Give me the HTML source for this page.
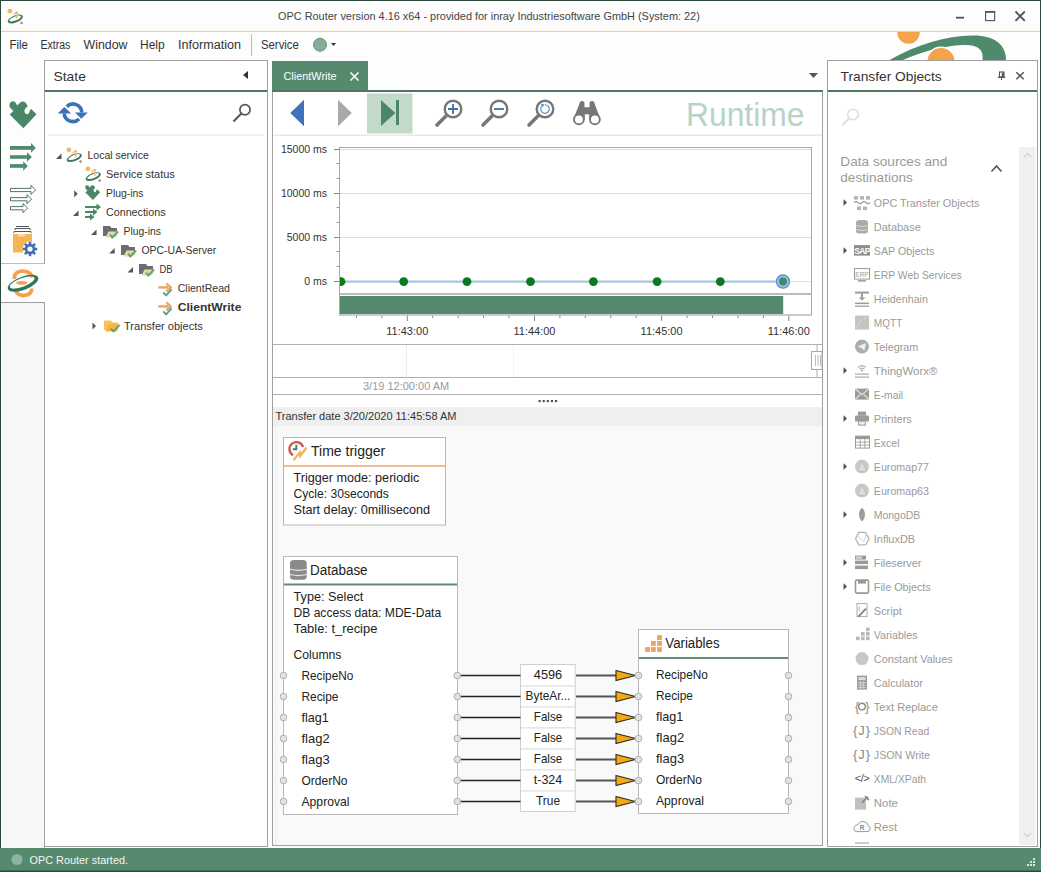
<!DOCTYPE html>
<html><head><meta charset="utf-8">
<style>
*{margin:0;padding:0}
html,body{width:1041px;height:872px;overflow:hidden;background:#fff}
svg{display:block;font-family:"Liberation Sans",sans-serif}
</style></head><body>
<svg width="1041" height="872" viewBox="0 0 1041 872">
<!-- base -->
<rect x="0" y="0" width="1041" height="872" fill="#fdfdfd"/>
<!-- title bar -->
<rect x="0" y="0" width="1041" height="31" fill="#fdfdfd"/><rect x="0" y="27" width="1041" height="4" fill="#fffaf3"/>
<rect x="0" y="31" width="1041" height="1" fill="#f3c9a5"/>
<text x="278" y="20" font-size="11" fill="#444" textLength="421.8" lengthAdjust="spacingAndGlyphs">OPC Router version 4.16 x64 - provided for inray Industriesoftware GmbH (System: 22)</text>
<!-- window buttons -->
<rect x="956" y="16.8" width="8" height="1.8" fill="#555"/>
<rect x="985.6" y="11.6" width="9" height="9" fill="none" stroke="#555" stroke-width="1.1"/>
<rect x="985" y="11" width="10.2" height="1.8" fill="#555"/>
<path d="M1015.5 11.5 L1024.8 20.8 M1024.8 11.5 L1015.5 20.8" stroke="#555" stroke-width="1.9"/>
<!-- big logo behind -->
<g id="biglogo">
 <clipPath id="clipLogo"><rect x="860" y="32" width="181" height="28"/></clipPath>
 <g clip-path="url(#clipLogo)">
  <circle cx="908.5" cy="32.5" r="11.2" fill="#f4a34b"/>
  <path d="M886 62 C915 45 945 36 972 35.5 C995 35 1007 45 1006 62 L982 62 C985 50 978 44 963 45 C940 46 915 54 899 62 Z" fill="#4f8a6c"/>
  <circle cx="941" cy="61.5" r="14.3" fill="#f4a34b" stroke="#fff" stroke-width="1.4"/>
 </g>
</g>
<!-- menu -->
<g font-size="12" fill="#333">
 <text x="9.5" y="49" textLength="18.5" lengthAdjust="spacingAndGlyphs">File</text>
 <text x="40.5" y="49" textLength="29.8" lengthAdjust="spacingAndGlyphs">Extras</text>
 <text x="83.5" y="49" textLength="44.0" lengthAdjust="spacingAndGlyphs">Window</text>
 <text x="140" y="49" textLength="24.7" lengthAdjust="spacingAndGlyphs">Help</text>
 <text x="178" y="49" textLength="63.1" lengthAdjust="spacingAndGlyphs">Information</text>
 <text x="261" y="49" textLength="37.8" lengthAdjust="spacingAndGlyphs">Service</text>
</g>
<rect x="251" y="34" width="1" height="22" fill="#bbb"/>
<circle cx="320" cy="44.7" r="6.5" fill="#86ad96" stroke="#6f8f7c" stroke-width="1"/>
<path d="M331 43 L336 43 L333.5 46 Z" fill="#333"/>
<!-- window border -->
<rect x="0" y="0" width="1" height="872" fill="#2b4a3b"/>
<rect x="1040" y="0" width="1" height="872" fill="#2b4a3b"/>
<rect x="0" y="0" width="1041" height="1" fill="#2b4a3b"/>

<!-- left sidebar -->
<rect x="1" y="302" width="43" height="546" fill="#f7f7f7"/>
<path d="M1 263.5 H44.5 V60" stroke="#bdbdbd" fill="none"/>
<path d="M1 302.5 H44.5 V848" stroke="#9e9e9e" fill="none"/>


<!-- sidebar icons -->
<g id="sideicons">
 <path d="M9.7 114.6 L13.4 111 L10.2 107.8 C9 106.4 9.2 103.2 10.8 102 C12.4 100.8 14.4 101.2 15.4 102.4 L17.2 105.6 L20.3 102.5 C21.6 101.3 24.2 101.3 25.6 102.7 L27.8 105.9 L25.4 108.4 C23.9 110.2 24.4 113.2 26.4 114 C28 114.6 29.2 113.6 29.9 110.3 L31.2 108.9 L36.5 114.2 L23.4 128.3 Z" fill="#4a8767"/>
 <g fill="#4f8a6c">
  <rect x="10" y="146" width="21.5" height="3.8"/><path d="M31 143 L35.8 147.9 L31 152.7Z"/>
  <rect x="10" y="155.2" width="17.5" height="3.6"/><path d="M27 152.3 L31.9 157 L27 161.8Z"/>
  <rect x="10" y="164.1" width="13.5" height="3.7"/><path d="M23.2 161.2 L27.8 166 L23.2 170.8Z"/>
 </g>
 <g fill="#fff" stroke="#3f6253" stroke-width="0.9">
  <path d="M10.5 188.4 H31 V185.4 L35.6 189.9 L31 194.5 V191.6 H10.5Z"/>
  <path d="M10.5 197.6 H27 V194.6 L31.6 199.1 L27 203.7 V200.8 H10.5Z"/>
  <path d="M10.5 206.6 H23 V203.6 L27.6 208.1 L23 212.7 V209.8 H10.5Z"/>
 </g>
 <g>
  <path d="M16 226.5 H29" stroke="#555" stroke-width="1"/>
  <path d="M15 230 V228.5 H30 V230" stroke="#555" stroke-width="1" fill="none"/>
  <path d="M14 233 V231.5 H31 V233" stroke="#555" stroke-width="1" fill="none"/>
  <rect x="13" y="234" width="19" height="18.5" fill="#f6b554"/>
  <rect x="18" y="234" width="7" height="2.5" fill="#fbd9a0"/>
  <g transform="translate(30,249)">
   <circle r="7.5" fill="#fff"/>
   <g fill="#3e6eb0">
    <circle r="5.2"/>
    <rect x="-1.3" y="-7.2" width="2.6" height="14.4"/>
    <rect x="-7.2" y="-1.3" width="14.4" height="2.6"/>
    <rect x="-1.3" y="-7.2" width="2.6" height="14.4" transform="rotate(45)"/>
    <rect x="-7.2" y="-1.3" width="14.4" height="2.6" transform="rotate(45)"/>
   </g>
   <circle r="2.6" fill="#fff"/>
  </g>
 </g>
 <g>
  <path d="M14.5 279 C13.5 273 19 271 23 271.2 C28 271.4 31.5 273.5 31.8 277.5" stroke="#f1a24f" stroke-width="3.8" fill="none"/>
  <path d="M15.5 288.5 C16 294 20 295.5 23 295.5 C29 295.5 31.8 292.5 31.8 288.5" stroke="#f1a24f" stroke-width="3.8" fill="none"/>
  <ellipse cx="21.8" cy="282.8" rx="5.6" ry="1.9" fill="#f1a24f"/>
  <g transform="rotate(-21 23 283.3)"><path fill-rule="evenodd" fill="#2b7658" d="M6.8 283.3 A16.2 6.6 0 1 0 39.2 283.3 A16.2 6.6 0 1 0 6.8 283.3 Z M9.3 282.3 A13.2 4.3 0 1 0 35.7 282.3 A13.2 4.3 0 1 0 9.3 282.3 Z"/></g>
 </g>
</g>

<!-- State panel -->
<rect x="44.5" y="60.5" width="223" height="786" fill="#fff" stroke="#a0a0a0"/>
<rect x="43.5" y="264" width="2" height="38" fill="#fff"/>
<rect x="45" y="90" width="222" height="2" fill="#527565"/>
<text x="53.5" y="81" font-size="13.5" fill="#333" textLength="32.4" lengthAdjust="spacingAndGlyphs">State</text>
<path d="M243 75 L248 71 L248 79 Z" fill="#333"/>
<rect x="48" y="134.5" width="216" height="1" fill="#e3e3e3"/>


<defs>
 <g id="fold">
  <path d="M0 0 H7 L8.5 2 H14 V10 H0 Z" fill="#6f6b73"/>
  <path d="M2.5 11.5 L5.5 5.5 H16 L12.5 11.5 Z" fill="#e3dca0"/>
  <path d="M7 8.5 L9.2 11.5 L15 5.5" stroke="#5f9f7c" stroke-width="1.8" fill="none"/>
 </g>
 <g id="foldy">
  <path d="M0 0.5 H7 L8.5 2.5 H14 V10 H0 Z" fill="#f5c25c"/>
  <path d="M1.5 11.5 L4.5 4.5 H16 L13 11.5 Z" fill="#f2b444"/>
  <path d="M7 8.5 L9.5 11.5 L15.5 5" stroke="#5f9f7c" stroke-width="1.8" fill="none"/>
 </g>
 <g id="carrow">
  <path d="M0 0 H10" stroke="#e9a562" stroke-width="2.4"/>
  <path d="M8 -4 L12.5 0 L8 4" stroke="#e9a562" stroke-width="2.2" fill="none"/>
  <path d="M5 5 L7.8 8 L13.3 2" stroke="#5a9c8a" stroke-width="1.8" fill="none"/>
 </g>
 <g id="orb">
  <circle cx="2.9" cy="2.8" r="2.4" fill="#e7bd5e"/>
  <circle cx="9.6" cy="4.3" r="1.5" fill="#e9b49c"/>
  <circle cx="7.3" cy="5.6" r="1" fill="#e9b49c"/>
  <g transform="rotate(-22 8.3 10.6)"><path fill-rule="evenodd" fill="#3e7862" d="M0.2 10.6 A8.1 3.5 0 1 0 16.4 10.6 A8.1 3.5 0 1 0 0.2 10.6Z M2.2 10.1 A6.2 2 0 1 0 14.6 10.1 A6.2 2 0 1 0 2.2 10.1Z"/></g>
  <rect x="8.8" y="6" width="1.6" height="4" fill="#e9c46a"/>
  <circle cx="14.6" cy="14.6" r="1.3" fill="#a58f80"/>
 </g>
 <path id="exp" d="M0 0 L5.5 -5.5 L5.5 0 Z" fill="#555"/>
 <path id="col" d="M0 -3.5 L3.5 0 L0 3.5 Z" fill="#555"/>
</defs>
<use href="#orb" x="7" y="8.4"/>
<g id="stateToolbar">
 <g fill="none" stroke="#3b73b9" stroke-width="3.6">
  <path d="M66.8 106.6 A8.8 8.8 0 0 1 81.8 112.5"/>
  <path d="M64.2 113.3 A8.8 8.8 0 0 0 79.2 119"/>
 </g>
 <path d="M57.7 113.6 L64.3 106.9 L71.2 113.6Z" fill="#3b73b9"/>
 <path d="M75 112.4 L87.9 112.4 L81.3 118.8Z" fill="#3b73b9"/>
 <circle cx="245" cy="109.8" r="5.1" fill="none" stroke="#555" stroke-width="1.7"/>
 <path d="M241.3 113.5 L233.5 121.5" stroke="#555" stroke-width="2"/>
</g>
<g id="tree" font-size="11" fill="#333">
 <use href="#exp" x="56" y="159"/>
 <use href="#orb" x="66" y="147"/>
 <text x="87.5" y="158.7" textLength="61.3" lengthAdjust="spacingAndGlyphs">Local service</text>
 <use href="#orb" x="85" y="166"/>
 <text x="106" y="177.7" textLength="68.8" lengthAdjust="spacingAndGlyphs">Service status</text>
 <use href="#col" x="74.2" y="193.7"/>
 <g transform="translate(85,185) scale(0.55)"><path d="M9.7 114.6 L13.4 111 L10.2 107.8 C9 106.4 9.2 103.2 10.8 102 C12.4 100.8 14.4 101.2 15.4 102.4 L17.2 105.6 L20.3 102.5 C21.6 101.3 24.2 101.3 25.6 102.7 L27.8 105.9 L25.4 108.4 C23.9 110.2 24.4 113.2 26.4 114 C28 114.6 29.2 113.6 29.9 110.3 L31.2 108.9 L36.5 114.2 L23.4 128.3 Z" transform="translate(-9,-101)" fill="#4a8767"/></g>
 <text x="106" y="196.7" textLength="37.5" lengthAdjust="spacingAndGlyphs">Plug-ins</text>
 <use href="#exp" x="73" y="215.9"/>
 <g fill="#4a8767">
  <rect x="85" y="206" width="12" height="2"/><path d="M96.5 203.5 L101 207 L96.5 210.5Z"/>
  <rect x="85" y="211" width="8.5" height="2"/><path d="M93 208.5 L97.5 212 L93 215.5Z"/>
  <rect x="85" y="216" width="5.5" height="2"/><path d="M90 213.5 L94.5 217 L90 220.5Z"/>
 </g>
 <text x="106" y="215.7" textLength="59.5" lengthAdjust="spacingAndGlyphs">Connections</text>
 <use href="#exp" x="91" y="234.9"/>
 <use href="#fold" x="103" y="226"/>
 <text x="123.5" y="234.7" textLength="37.5" lengthAdjust="spacingAndGlyphs">Plug-ins</text>
 <use href="#exp" x="109.2" y="253.6"/>
 <use href="#fold" x="121" y="245"/>
 <text x="141.5" y="253.7" textLength="74.8" lengthAdjust="spacingAndGlyphs">OPC-UA-Server</text>
 <use href="#exp" x="127.5" y="272.6"/>
 <use href="#fold" x="139" y="264"/>
 <text x="159.5" y="272.7" textLength="13.1" lengthAdjust="spacingAndGlyphs">DB</text>
 <use href="#carrow" x="158.3" y="287.4"/>
 <text x="177.7" y="291.7" textLength="52.2" lengthAdjust="spacingAndGlyphs">ClientRead</text>
 <use href="#carrow" x="158.3" y="306.4"/>
 <text x="177.7" y="310.7" font-weight="bold" textLength="63.7" lengthAdjust="spacingAndGlyphs">ClientWrite</text>
 <use href="#col" x="92.5" y="326"/>
 <use href="#foldy" x="104" y="320"/>
 <text x="124" y="329.7" textLength="78.8" lengthAdjust="spacingAndGlyphs">Transfer objects</text>
</g>

<!-- Document panel -->
<rect x="272.5" y="91.5" width="550" height="754" fill="#fff" stroke="#a0a0a0"/>
<rect x="272" y="61" width="96" height="31" fill="#558a6e"/>
<rect x="272" y="90" width="551" height="2" fill="#527565"/>
<text x="283.5" y="80" font-size="11.5" fill="#fff" textLength="53.0" lengthAdjust="spacingAndGlyphs">ClientWrite</text>
<path d="M350.5 72.5 L358.5 80.5 M358.5 72.5 L350.5 80.5" stroke="#fff" stroke-width="1.6"/>
<path d="M809 73 L818 73 L813.5 78 Z" fill="#555"/>
<rect x="273" y="134.5" width="549" height="1.5" fill="#e8e8e8"/>


<g id="docToolbar">
 <path d="M290.3 113 L304 99.8 L304 126.2 Z" fill="#3d73b8"/>
 <path d="M338 99.8 L351.8 113 L338 126.2 Z" fill="#a9a9a9"/>
 <rect x="367" y="93.5" width="45.5" height="40" fill="#c3dacb"/>
 <path d="M381 100 L395.3 113 L381 126 Z" fill="#4a8767"/>
 <rect x="396" y="100" width="3" height="25" fill="#4a8767"/>
 <g stroke="#777" fill="none">
  <circle cx="453" cy="109" r="8.3" stroke-width="2.4" fill="#fff"/>
  <path d="M446.5 115.5 L437 125" stroke-width="3.6" stroke-linecap="round"/>
  <circle cx="499" cy="109" r="8.3" stroke-width="2.4" fill="#fff"/>
  <path d="M492.5 115.5 L483 125" stroke-width="3.6" stroke-linecap="round"/>
  <circle cx="545" cy="109" r="8.3" stroke-width="2.4" fill="#fff"/>
  <path d="M538.5 115.5 L529 125" stroke-width="3.6" stroke-linecap="round"/>
 </g>
 <path d="M453 104 V114 M448 109 H458" stroke="#3d6fae" stroke-width="1.8"/>
 <path d="M494 109 H504" stroke="#3d6fae" stroke-width="1.8"/>
 <path d="M541.5 106.5 A4.3 4.3 0 1 0 545 104.7" stroke="#4d8ac9" stroke-width="1.1" fill="none"/>
 <path d="M541 103.5 L544.8 104.7 L541.8 107.3Z" fill="#4d8ac9"/>
 <path d="M573.2 119.4 L579.5 103.6 A2.5 2.5 0 0 1 584.5 103.6 V107.3 H589.5 V103.6 A2.5 2.5 0 0 1 594.5 103.6 L600.6 119.4 Z" fill="#777"/>
 <rect x="584.8" y="114.3" width="4.3" height="8" fill="#fff"/>
 <circle cx="578.9" cy="119.4" r="4.9" fill="#fff" stroke="#777" stroke-width="1.9"/>
 <circle cx="594.9" cy="119.4" r="4.9" fill="#fff" stroke="#777" stroke-width="1.9"/>
 <text x="686" y="125.7" font-size="32.8" fill="#b6d3ca" textLength="118.4" lengthAdjust="spacingAndGlyphs">Runtime</text>
</g>

<g id="chart">
<rect x="339.5" y="147.5" width="472" height="167.5" fill="#fff" stroke="#a8a8a8"/>
<path d="M340 149.5 H811" stroke="#dcdcdc" stroke-width="1"/>
<path d="M340 193.5 H811" stroke="#dcdcdc" stroke-width="1"/>
<path d="M340 237.5 H811" stroke="#dcdcdc" stroke-width="1"/>
<path d="M340 281.6 H811" stroke="#e0e0e0" stroke-width="1"/>
<path d="M334 149.5 H339.5" stroke="#888" stroke-width="1"/>
<text x="327" y="152.8" font-size="10.5" fill="#333" text-anchor="end">15000 ms</text>
<path d="M334 193.5 H339.5" stroke="#888" stroke-width="1"/>
<text x="327" y="197.0" font-size="10.5" fill="#333" text-anchor="end">10000 ms</text>
<path d="M334 237.5 H339.5" stroke="#888" stroke-width="1"/>
<text x="327" y="241.20000000000002" font-size="10.5" fill="#333" text-anchor="end">5000 ms</text>
<path d="M334 281.5 H339.5" stroke="#888" stroke-width="1"/>
<text x="327" y="285.40000000000003" font-size="10.5" fill="#333" text-anchor="end">0 ms</text>
<path d="M336.5 163.5 H339.5" stroke="#999" stroke-width="1"/>
<path d="M336.5 178.5 H339.5" stroke="#999" stroke-width="1"/>
<path d="M336.5 207.5 H339.5" stroke="#999" stroke-width="1"/>
<path d="M336.5 222.5 H339.5" stroke="#999" stroke-width="1"/>
<path d="M336.5 251.5 H339.5" stroke="#999" stroke-width="1"/>
<path d="M336.5 266.5 H339.5" stroke="#999" stroke-width="1"/>
<path d="M340 281.6 H783" stroke="#aac6de" stroke-width="2.3"/>
<clipPath id="plotclip"><rect x="340" y="147" width="472" height="168"/></clipPath><circle cx="341" cy="281.6" r="4.4" fill="#0b7a1f" clip-path="url(#plotclip)"/>
<circle cx="403.7" cy="281.6" r="4.4" fill="#0b7a1f"/>
<circle cx="467" cy="281.6" r="4.4" fill="#0b7a1f"/>
<circle cx="530.5" cy="281.6" r="4.4" fill="#0b7a1f"/>
<circle cx="593.4" cy="281.6" r="4.4" fill="#0b7a1f"/>
<circle cx="657.1" cy="281.6" r="4.4" fill="#0b7a1f"/>
<circle cx="720.3" cy="281.6" r="4.4" fill="#0b7a1f"/>
<circle cx="783" cy="281.6" r="6.6" fill="#9ec0e6" stroke="#5e8fcb" stroke-width="1.3"/>
<circle cx="783" cy="281.6" r="4" fill="#3f8a6c"/>
<rect x="339.5" y="293.2" width="472" height="1.6" fill="#adadad"/>
<rect x="340" y="296" width="443.2" height="18" fill="#558a6e"/>
<path d="M339.5 315 H811.6" stroke="#b5c6d3" stroke-width="1.2"/>
<path d="M356.4 315.5 V318" stroke="#888" stroke-width="1"/>
<path d="M381.9 315.5 V318" stroke="#888" stroke-width="1"/>
<path d="M407.3 315.5 V321" stroke="#888" stroke-width="1"/>
<path d="M432.7 315.5 V318" stroke="#888" stroke-width="1"/>
<path d="M458.2 315.5 V318" stroke="#888" stroke-width="1"/>
<path d="M483.6 315.5 V318" stroke="#888" stroke-width="1"/>
<path d="M509.0 315.5 V318" stroke="#888" stroke-width="1"/>
<path d="M534.5 315.5 V321" stroke="#888" stroke-width="1"/>
<path d="M559.9 315.5 V318" stroke="#888" stroke-width="1"/>
<path d="M585.3 315.5 V318" stroke="#888" stroke-width="1"/>
<path d="M610.8 315.5 V318" stroke="#888" stroke-width="1"/>
<path d="M636.2 315.5 V318" stroke="#888" stroke-width="1"/>
<path d="M661.6 315.5 V321" stroke="#888" stroke-width="1"/>
<path d="M687.1 315.5 V318" stroke="#888" stroke-width="1"/>
<path d="M712.5 315.5 V318" stroke="#888" stroke-width="1"/>
<path d="M737.9 315.5 V318" stroke="#888" stroke-width="1"/>
<path d="M763.4 315.5 V318" stroke="#888" stroke-width="1"/>
<path d="M788.8 315.5 V321" stroke="#888" stroke-width="1"/>
<text x="407.3" y="335" font-size="11" fill="#333" text-anchor="middle">11:43:00</text>
<text x="534.5" y="335" font-size="11" fill="#333" text-anchor="middle">11:44:00</text>
<text x="661.6" y="335" font-size="11" fill="#333" text-anchor="middle">11:45:00</text>
<text x="788.8" y="335" font-size="11" fill="#333" text-anchor="middle">11:46:00</text>
<rect x="273" y="344" width="549" height="1" fill="#b0b0b0"/>
<rect x="406" y="345" width="1" height="32" fill="#ececec"/>
<rect x="513" y="345" width="1" height="32" fill="#f2f2f2"/>
<rect x="273" y="377" width="549" height="1" fill="#b0b0b0"/>
<rect x="816.5" y="345" width="1" height="32" fill="#b0b0b0"/>
<rect x="811.5" y="351.5" width="10.5" height="18" fill="#fff" stroke="#a8a8a8"/>
<path d="M815.5 355 V366 M818 355 V366 M820.5 355 V366" stroke="#aaa" stroke-width="0.8"/>
<text x="363" y="390.3" font-size="11" fill="#999">3/19 12:00:00 AM</text>
<rect x="273" y="394" width="549" height="1" fill="#b0b0b0"/>
<rect x="538.5" y="400" width="2.2" height="2.2" fill="#555"/>
<rect x="542.6" y="400" width="2.2" height="2.2" fill="#555"/>
<rect x="546.7" y="400" width="2.2" height="2.2" fill="#555"/>
<rect x="550.8" y="400" width="2.2" height="2.2" fill="#555"/>
<rect x="554.9" y="400" width="2.2" height="2.2" fill="#555"/>
<rect x="273" y="407" width="549" height="19" fill="#efefef"/>
<text x="275.5" y="420" font-size="11" fill="#333">Transfer date 3/20/2020 11:45:58 AM</text>
<rect x="273" y="426" width="549" height="419" fill="#f9f9f9"/>
<rect x="275.5" y="426" width="1" height="419" fill="#ececec"/>
</g>

<g id="diagram">
<rect x="283.5" y="437.5" width="162" height="87.5" fill="#fff" stroke="#b8b8b8"/>
<rect x="284" y="465" width="161" height="2" fill="#f1bd8e"/>
<g>
 <path d="M303.1 447 A7 7 0 1 0 293 455.2" stroke="#c95a4c" stroke-width="2.3" fill="none"/>
 <path d="M296.3 444.8 V449.3 H292.8" stroke="#3f7a78" stroke-width="1.9" fill="none"/>
 <path d="M293.5 460 L300 452.5 L300.3 456 L306.5 447.5" stroke="#f0b45a" stroke-width="2.2" fill="none"/>
</g>
<text x="311" y="456" font-size="14" fill="#222" textLength="74.3" lengthAdjust="spacingAndGlyphs">Time trigger</text>
<text x="293.5" y="481.9" font-size="12.4" fill="#222" textLength="125.8" lengthAdjust="spacingAndGlyphs">Trigger mode: periodic</text>
<text x="293.5" y="497.9" font-size="12.4" fill="#222" textLength="95.4" lengthAdjust="spacingAndGlyphs">Cycle: 30seconds</text>
<text x="293.5" y="513.9" font-size="12.4" fill="#222" textLength="136.6" lengthAdjust="spacingAndGlyphs">Start delay: 0millisecond</text>
<rect x="283.5" y="556.5" width="174" height="258" fill="#fff" stroke="#b8b8b8"/>
<rect x="284" y="583.5" width="173" height="2" fill="#5f8f78"/>
<g>
 <rect x="290" y="560" width="16.7" height="19.8" rx="4" ry="3" fill="#8a8a8a"/>
 <path d="M290 569.3 Q298.3 571.5 306.7 569.3 M290 574.5 Q298.3 576.7 306.7 574.5" stroke="#e6e6e6" stroke-width="1.1" fill="none"/>
</g>
<text x="310" y="574.6" font-size="14" fill="#222" textLength="57.6" lengthAdjust="spacingAndGlyphs">Database</text>
<text x="293.5" y="601.0" font-size="12.4" fill="#222" textLength="69.8" lengthAdjust="spacingAndGlyphs">Type: Select</text>
<text x="293.5" y="616.8" font-size="12.4" fill="#222" textLength="147.7" lengthAdjust="spacingAndGlyphs">DB access data: MDE-Data</text>
<text x="293.5" y="632.6" font-size="12.4" fill="#222" textLength="83.8" lengthAdjust="spacingAndGlyphs">Table: t_recipe</text>
<text x="293.5" y="658.6" font-size="12.4" fill="#222" textLength="47.9" lengthAdjust="spacingAndGlyphs">Columns</text>
<rect x="638.5" y="629.5" width="150" height="184" fill="#fff" stroke="#b8b8b8"/>
<rect x="639" y="657" width="149" height="2" fill="#5f8f78"/>
<rect x="657.1" y="635.2" width="4.8" height="4.8" fill="#eea25a"/>
<rect x="651" y="641" width="4.8" height="4.8" fill="#eea25a"/>
<rect x="657.1" y="641" width="4.8" height="4.8" fill="#eea25a"/>
<rect x="645.1" y="647.1" width="4.8" height="4.8" fill="#eea25a"/>
<rect x="651" y="647.1" width="4.8" height="4.8" fill="#eea25a"/>
<rect x="657.1" y="647.1" width="4.8" height="4.8" fill="#eea25a"/>
<text x="665.3" y="647.8" font-size="14" fill="#222" textLength="54.2" lengthAdjust="spacingAndGlyphs">Variables</text>
<rect x="520.5" y="664.5" width="54.7" height="147" fill="#fff" stroke="#cfcfcf"/>
<rect x="521" y="685.4" width="54" height="1" fill="#d8d8d8"/>
<rect x="521" y="706.4" width="54" height="1" fill="#d8d8d8"/>
<rect x="521" y="727.4" width="54" height="1" fill="#d8d8d8"/>
<rect x="521" y="748.4" width="54" height="1" fill="#d8d8d8"/>
<rect x="521" y="769.4" width="54" height="1" fill="#d8d8d8"/>
<rect x="521" y="790.4" width="54" height="1" fill="#d8d8d8"/>
<text x="301.5" y="679.8" font-size="12.4" fill="#222" textLength="51.8" lengthAdjust="spacingAndGlyphs">RecipeNo</text>
<text x="656" y="679.1" font-size="12.4" fill="#222" textLength="51.8" lengthAdjust="spacingAndGlyphs">RecipeNo</text>
<text x="548" y="679.1" font-size="12.4" fill="#222" text-anchor="middle" textLength="28.4" lengthAdjust="spacingAndGlyphs">4596</text>
<path d="M460 675.5 H520.5" stroke="#222" stroke-width="1.7"/>
<path d="M576 675.5 H617" stroke="#555" stroke-width="2"/>
<path d="M616 670.5 L635.5 675.5 L616 680.5 Z" fill="#f5a811" stroke="#2a2a2a" stroke-width="1.1" stroke-linejoin="miter"/>
<circle cx="283.5" cy="675.5" r="3.3" fill="#e2e2e2" stroke="#b0b0b0" stroke-width="1"/>
<circle cx="457.3" cy="675.5" r="3.3" fill="#e2e2e2" stroke="#b0b0b0" stroke-width="1"/>
<circle cx="638.5" cy="675.5" r="3.3" fill="#e2e2e2" stroke="#b0b0b0" stroke-width="1"/>
<circle cx="788.5" cy="675.5" r="3.3" fill="#e2e2e2" stroke="#b0b0b0" stroke-width="1"/>
<text x="301.5" y="700.8" font-size="12.4" fill="#222" textLength="36.9" lengthAdjust="spacingAndGlyphs">Recipe</text>
<text x="656" y="700.1" font-size="12.4" fill="#222" textLength="36.9" lengthAdjust="spacingAndGlyphs">Recipe</text>
<text x="548" y="700.1" font-size="12.4" fill="#222" text-anchor="middle" textLength="44.8" lengthAdjust="spacingAndGlyphs">ByteAr...</text>
<path d="M460 696.5 H520.5" stroke="#222" stroke-width="1.7"/>
<path d="M576 696.5 H617" stroke="#555" stroke-width="2"/>
<path d="M616 691.5 L635.5 696.5 L616 701.5 Z" fill="#f5a811" stroke="#2a2a2a" stroke-width="1.1" stroke-linejoin="miter"/>
<circle cx="283.5" cy="696.5" r="3.3" fill="#e2e2e2" stroke="#b0b0b0" stroke-width="1"/>
<circle cx="457.3" cy="696.5" r="3.3" fill="#e2e2e2" stroke="#b0b0b0" stroke-width="1"/>
<circle cx="638.5" cy="696.5" r="3.3" fill="#e2e2e2" stroke="#b0b0b0" stroke-width="1"/>
<circle cx="788.5" cy="696.5" r="3.3" fill="#e2e2e2" stroke="#b0b0b0" stroke-width="1"/>
<text x="301.5" y="721.8" font-size="12.4" fill="#222" textLength="27.4" lengthAdjust="spacingAndGlyphs">flag1</text>
<text x="656" y="721.1" font-size="12.4" fill="#222" textLength="27.4" lengthAdjust="spacingAndGlyphs">flag1</text>
<text x="548" y="721.1" font-size="12.4" fill="#222" text-anchor="middle" textLength="28.3" lengthAdjust="spacingAndGlyphs">False</text>
<path d="M460 717.5 H520.5" stroke="#222" stroke-width="1.7"/>
<path d="M576 717.5 H617" stroke="#555" stroke-width="2"/>
<path d="M616 712.5 L635.5 717.5 L616 722.5 Z" fill="#f5a811" stroke="#2a2a2a" stroke-width="1.1" stroke-linejoin="miter"/>
<circle cx="283.5" cy="717.5" r="3.3" fill="#e2e2e2" stroke="#b0b0b0" stroke-width="1"/>
<circle cx="457.3" cy="717.5" r="3.3" fill="#e2e2e2" stroke="#b0b0b0" stroke-width="1"/>
<circle cx="638.5" cy="717.5" r="3.3" fill="#e2e2e2" stroke="#b0b0b0" stroke-width="1"/>
<circle cx="788.5" cy="717.5" r="3.3" fill="#e2e2e2" stroke="#b0b0b0" stroke-width="1"/>
<text x="301.5" y="742.8" font-size="12.4" fill="#222" textLength="28.1" lengthAdjust="spacingAndGlyphs">flag2</text>
<text x="656" y="742.1" font-size="12.4" fill="#222" textLength="28.1" lengthAdjust="spacingAndGlyphs">flag2</text>
<text x="548" y="742.1" font-size="12.4" fill="#222" text-anchor="middle" textLength="28.3" lengthAdjust="spacingAndGlyphs">False</text>
<path d="M460 738.5 H520.5" stroke="#222" stroke-width="1.7"/>
<path d="M576 738.5 H617" stroke="#555" stroke-width="2"/>
<path d="M616 733.5 L635.5 738.5 L616 743.5 Z" fill="#f5a811" stroke="#2a2a2a" stroke-width="1.1" stroke-linejoin="miter"/>
<circle cx="283.5" cy="738.5" r="3.3" fill="#e2e2e2" stroke="#b0b0b0" stroke-width="1"/>
<circle cx="457.3" cy="738.5" r="3.3" fill="#e2e2e2" stroke="#b0b0b0" stroke-width="1"/>
<circle cx="638.5" cy="738.5" r="3.3" fill="#e2e2e2" stroke="#b0b0b0" stroke-width="1"/>
<circle cx="788.5" cy="738.5" r="3.3" fill="#e2e2e2" stroke="#b0b0b0" stroke-width="1"/>
<text x="301.5" y="763.8" font-size="12.4" fill="#222" textLength="28.1" lengthAdjust="spacingAndGlyphs">flag3</text>
<text x="656" y="763.1" font-size="12.4" fill="#222" textLength="28.1" lengthAdjust="spacingAndGlyphs">flag3</text>
<text x="548" y="763.1" font-size="12.4" fill="#222" text-anchor="middle" textLength="28.3" lengthAdjust="spacingAndGlyphs">False</text>
<path d="M460 759.5 H520.5" stroke="#222" stroke-width="1.7"/>
<path d="M576 759.5 H617" stroke="#555" stroke-width="2"/>
<path d="M616 754.5 L635.5 759.5 L616 764.5 Z" fill="#f5a811" stroke="#2a2a2a" stroke-width="1.1" stroke-linejoin="miter"/>
<circle cx="283.5" cy="759.5" r="3.3" fill="#e2e2e2" stroke="#b0b0b0" stroke-width="1"/>
<circle cx="457.3" cy="759.5" r="3.3" fill="#e2e2e2" stroke="#b0b0b0" stroke-width="1"/>
<circle cx="638.5" cy="759.5" r="3.3" fill="#e2e2e2" stroke="#b0b0b0" stroke-width="1"/>
<circle cx="788.5" cy="759.5" r="3.3" fill="#e2e2e2" stroke="#b0b0b0" stroke-width="1"/>
<text x="301.5" y="784.8" font-size="12.4" fill="#222" textLength="46.0" lengthAdjust="spacingAndGlyphs">OrderNo</text>
<text x="656" y="784.1" font-size="12.4" fill="#222" textLength="46.0" lengthAdjust="spacingAndGlyphs">OrderNo</text>
<text x="548" y="784.1" font-size="12.4" fill="#222" text-anchor="middle" textLength="28.5" lengthAdjust="spacingAndGlyphs">t-324</text>
<path d="M460 780.5 H520.5" stroke="#222" stroke-width="1.7"/>
<path d="M576 780.5 H617" stroke="#555" stroke-width="2"/>
<path d="M616 775.5 L635.5 780.5 L616 785.5 Z" fill="#f5a811" stroke="#2a2a2a" stroke-width="1.1" stroke-linejoin="miter"/>
<circle cx="283.5" cy="780.5" r="3.3" fill="#e2e2e2" stroke="#b0b0b0" stroke-width="1"/>
<circle cx="457.3" cy="780.5" r="3.3" fill="#e2e2e2" stroke="#b0b0b0" stroke-width="1"/>
<circle cx="638.5" cy="780.5" r="3.3" fill="#e2e2e2" stroke="#b0b0b0" stroke-width="1"/>
<circle cx="788.5" cy="780.5" r="3.3" fill="#e2e2e2" stroke="#b0b0b0" stroke-width="1"/>
<text x="301.5" y="805.8" font-size="12.4" fill="#222" textLength="48.0" lengthAdjust="spacingAndGlyphs">Approval</text>
<text x="656" y="805.1" font-size="12.4" fill="#222" textLength="48.0" lengthAdjust="spacingAndGlyphs">Approval</text>
<text x="548" y="805.1" font-size="12.4" fill="#222" text-anchor="middle" textLength="24.0" lengthAdjust="spacingAndGlyphs">True</text>
<path d="M460 801.5 H520.5" stroke="#222" stroke-width="1.7"/>
<path d="M576 801.5 H617" stroke="#555" stroke-width="2"/>
<path d="M616 796.5 L635.5 801.5 L616 806.5 Z" fill="#f5a811" stroke="#2a2a2a" stroke-width="1.1" stroke-linejoin="miter"/>
<circle cx="283.5" cy="801.5" r="3.3" fill="#e2e2e2" stroke="#b0b0b0" stroke-width="1"/>
<circle cx="457.3" cy="801.5" r="3.3" fill="#e2e2e2" stroke="#b0b0b0" stroke-width="1"/>
<circle cx="638.5" cy="801.5" r="3.3" fill="#e2e2e2" stroke="#b0b0b0" stroke-width="1"/>
<circle cx="788.5" cy="801.5" r="3.3" fill="#e2e2e2" stroke="#b0b0b0" stroke-width="1"/>
</g>

<!-- Transfer objects panel -->
<rect x="827.5" y="60.5" width="210" height="786" fill="#fff" stroke="#a0a0a0"/>
<rect x="828" y="90" width="209" height="2" fill="#527565"/>
<text x="840.5" y="81" font-size="13.5" fill="#333" textLength="101.2" lengthAdjust="spacingAndGlyphs">Transfer Objects</text>
<rect x="1019" y="147" width="16.5" height="698" fill="#f0f0f0"/>

<g id="tolist">
<text x="840.3" y="166" font-size="13.6" fill="#9a9a9a" textLength="107.0" lengthAdjust="spacingAndGlyphs">Data sources and</text>
<text x="840.3" y="182.4" font-size="13.6" fill="#9a9a9a">destinations</text>
<path d="M991.5 171.5 L996.5 166 L1001.5 171.5" stroke="#555" stroke-width="1.6" fill="none"/>
<circle cx="853" cy="114.5" r="5.3" fill="none" stroke="#dedede" stroke-width="1.6"/><path d="M849 118.5 L842 125.5" stroke="#dedede" stroke-width="2"/>
<rect x="999.5" y="72" width="4.5" height="5" fill="#fff" stroke="#555" stroke-width="1.1"/><rect x="1001.8" y="72.5" width="2" height="4.5" fill="#555"/><path d="M998 77.3 H1005.2" stroke="#555" stroke-width="1.3"/><path d="M1001.5 77 V80" stroke="#555" stroke-width="1.1"/>
<path d="M1016.3 72.3 L1023.8 79.3 M1023.8 72.3 L1016.3 79.3" stroke="#555" stroke-width="1.5"/>
<path d="M1024 157 L1027.5 153.5 L1031 157" stroke="#d0d0d0" stroke-width="1.1" fill="none"/>
<path d="M1024 833 L1027.5 836.5 L1031 833" stroke="#d0d0d0" stroke-width="1.1" fill="none"/>
<path d="M843.5 199.29999999999998 L847 202.6 L843.5 205.9Z" fill="#555"/>
<g fill="#b4b4b4"><rect x="854" y="196.1" width="4" height="3.5"/><rect x="860" y="196.1" width="4" height="3.5"/><rect x="866" y="196.1" width="4" height="3.5"/><rect x="857" y="206.6" width="4" height="3.5"/><rect x="863" y="206.6" width="4" height="3.5"/></g><path d="M854 202.6 Q856 200.6 858 202.6 T862 202.6 T866 202.6 T870 202.6" stroke="#999" stroke-width="1.2" fill="none"/>
<text x="873.8" y="206.5" font-size="11" fill="#9a9a9a" textLength="105.7" lengthAdjust="spacingAndGlyphs">OPC Transfer Objects</text>
<rect x="856" y="220.1" width="12" height="13.5" rx="3.5" ry="2.5" fill="#aaa"/><path d="M856 225.6 Q862 227.6 868 225.6 M856 229.6 Q862 231.6 868 229.6" stroke="#ddd" stroke-width="0.9" fill="none"/>
<text x="873.8" y="230.5" font-size="11" fill="#9a9a9a" textLength="47.0" lengthAdjust="spacingAndGlyphs">Database</text>
<path d="M843.5 247.29999999999998 L847 250.6 L843.5 253.9Z" fill="#555"/>
<rect x="854" y="245.1" width="16" height="10.5" fill="#8e8e8e"/><text x="862" y="253.79999999999998" font-size="8.5" font-weight="bold" fill="#fff" text-anchor="middle" letter-spacing="-0.6">SAP</text>
<text x="873.8" y="254.5" font-size="11" fill="#9a9a9a" textLength="60.5" lengthAdjust="spacingAndGlyphs">SAP Objects</text>
<rect x="854.5" y="268.6" width="15" height="10.5" fill="#fff" stroke="#999" stroke-width="1"/><text x="862" y="277.1" font-size="6.5" fill="#999" text-anchor="middle">ERP</text><rect x="858" y="280.1" width="8" height="1.5" fill="#999"/>
<text x="873.8" y="278.5" font-size="11" fill="#9a9a9a" textLength="87.9" lengthAdjust="spacingAndGlyphs">ERP Web Services</text>
<g fill="#9a9a9a"><rect x="855" y="291.6" width="14" height="2"/><rect x="861" y="293.6" width="2" height="4"/><path d="M858.5 297.6 H865.5 L862 300.6Z"/><rect x="855" y="302.6" width="14" height="1.5"/><rect x="855" y="305.6" width="14" height="1.2"/></g>
<text x="873.8" y="302.5" font-size="11" fill="#9a9a9a" textLength="54.1" lengthAdjust="spacingAndGlyphs">Heidenhain</text>
<rect x="855" y="315.6" width="14" height="14" fill="#c4c4c4"/><path d="M857 327.6 Q860 319.6 867 317.6" stroke="#d8d8d8" stroke-width="1" fill="none"/>
<text x="873.8" y="326.5" font-size="11" fill="#9a9a9a" textLength="28.5" lengthAdjust="spacingAndGlyphs">MQTT</text>
<circle cx="862" cy="346.6" r="7" fill="#acacac"/><path d="M857.5 346.6 L866 343.1 L864.5 350.6 L861 348.1Z" fill="#eee"/>
<text x="873.8" y="350.5" font-size="11" fill="#9a9a9a" textLength="44.5" lengthAdjust="spacingAndGlyphs">Telegram</text>
<path d="M843.5 367.3 L847 370.6 L843.5 373.90000000000003Z" fill="#555"/>
<path d="M858 367.6 Q862 363.6 866 367.6 M859.5 369.1 Q862 366.6 864.5 369.1" stroke="#999" stroke-width="1" fill="none"/><circle cx="862" cy="370.6" r="1" fill="#999"/><path d="M855 374.1 H869 M855 377.1 H869" stroke="#999" stroke-width="1"/>
<text x="873.8" y="374.5" font-size="11" fill="#9a9a9a" textLength="63.7" lengthAdjust="spacingAndGlyphs">ThingWorx®</text>
<rect x="855" y="388.6" width="14" height="11" fill="#9a9a9a"/><path d="M855 388.6 L862 394.6 L869 388.6 M855 399.6 L860 394.6 M869 399.6 L864 394.6" stroke="#e8e8e8" stroke-width="1.2" fill="none"/>
<text x="873.8" y="398.5" font-size="11" fill="#9a9a9a" textLength="29.2" lengthAdjust="spacingAndGlyphs">E-mail</text>
<path d="M843.5 415.3 L847 418.6 L843.5 421.90000000000003Z" fill="#555"/>
<g fill="#9a9a9a"><rect x="858" y="411.6" width="8" height="4"/><rect x="855" y="415.6" width="14" height="6" rx="1"/><rect x="858" y="421.6" width="8" height="4"/></g><rect x="859" y="422.1" width="6" height="2.5" fill="#eee"/>
<text x="873.8" y="422.5" font-size="11" fill="#9a9a9a" textLength="38.1" lengthAdjust="spacingAndGlyphs">Printers</text>
<rect x="855.5" y="436.1" width="14" height="12" fill="#fff" stroke="#999"/><rect x="855.5" y="436.1" width="14" height="3" fill="#999"/><path d="M860.2 436.6 V448.1 M864.8 436.6 V448.1 M856 442.1 H869 M856 445.1 H869" stroke="#999" stroke-width="0.8"/>
<text x="873.8" y="446.5" font-size="11" fill="#9a9a9a" textLength="25.7" lengthAdjust="spacingAndGlyphs">Excel</text>
<path d="M843.5 463.3 L847 466.6 L843.5 469.90000000000003Z" fill="#555"/>
<circle cx="862" cy="466.6" r="7" fill="#c9c9c9"/><path d="M857.5 471.1 L862 461.6 L866.5 471.1Z" fill="#dedede" stroke="#bdbdbd" stroke-width="0.8"/>
<text x="873.8" y="470.5" font-size="11" fill="#9a9a9a" textLength="55.2" lengthAdjust="spacingAndGlyphs">Euromap77</text>
<circle cx="862" cy="490.6" r="7" fill="#c9c9c9"/><path d="M857.5 495.1 L862 485.6 L866.5 495.1Z" fill="#dedede" stroke="#bdbdbd" stroke-width="0.8"/>
<text x="873.8" y="494.5" font-size="11" fill="#9a9a9a" textLength="55.2" lengthAdjust="spacingAndGlyphs">Euromap63</text>
<path d="M843.5 511.3 L847 514.6 L843.5 517.9Z" fill="#555"/>
<path d="M862 507.6 C866 511.6 866 517.6 862 521.6 C858 517.6 858 511.6 862 507.6Z" fill="#9c9c9c"/>
<text x="873.8" y="518.5" font-size="11" fill="#9a9a9a" textLength="46.4" lengthAdjust="spacingAndGlyphs">MongoDB</text>
<path d="M859 532.1 L865.5 532.6 L869 538.6 L866 544.6 L859 545.1 L855.5 538.6Z" fill="none" stroke="#b4b4b4" stroke-width="1.3"/><path d="M858 536.6 L864 541.6 L866 534.6" stroke="#ccc" stroke-width="0.8" fill="none"/>
<text x="873.8" y="542.5" font-size="11" fill="#9a9a9a" textLength="41.3" lengthAdjust="spacingAndGlyphs">InfluxDB</text>
<path d="M843.5 559.3000000000001 L847 562.6 L843.5 565.9Z" fill="#555"/>
<g fill="#9a9a9a"><rect x="855" y="555.6" width="11" height="4"/><rect x="855" y="560.6" width="13" height="3.5"/><rect x="855" y="565.6" width="13" height="3.5"/></g><rect x="856" y="556.6" width="6" height="2" fill="#ddd"/>
<text x="873.8" y="566.5" font-size="11" fill="#9a9a9a" textLength="47.6" lengthAdjust="spacingAndGlyphs">Fileserver</text>
<path d="M843.5 583.3000000000001 L847 586.6 L843.5 589.9Z" fill="#555"/>
<rect x="855.5" y="580.1" width="13" height="13" rx="1" fill="#fff" stroke="#999" stroke-width="1.6"/><rect x="858" y="580.1" width="8" height="3.5" fill="#999"/>
<text x="873.8" y="590.5" font-size="11" fill="#9a9a9a" textLength="56.9" lengthAdjust="spacingAndGlyphs">File Objects</text>
<rect x="857" y="603.6" width="10" height="13" fill="#fff" stroke="#aaa"/><path d="M858.5 616.6 L866 608.6" stroke="#888" stroke-width="2"/><path d="M859.5 606.6 Q858 609.6 860 611.6" stroke="#999" stroke-width="0.8" fill="none"/>
<text x="873.8" y="614.5" font-size="11" fill="#9a9a9a" textLength="28.1" lengthAdjust="spacingAndGlyphs">Script</text>
<rect x="866" y="627.6" width="3.6" height="3.6" fill="#b8b8b8"/><rect x="861" y="632.1" width="3.6" height="3.6" fill="#b8b8b8"/><rect x="866" y="632.1" width="3.6" height="3.6" fill="#b8b8b8"/><rect x="856" y="636.6" width="3.6" height="3.6" fill="#b8b8b8"/><rect x="861" y="636.6" width="3.6" height="3.6" fill="#b8b8b8"/><rect x="866" y="636.6" width="3.6" height="3.6" fill="#b8b8b8"/>
<text x="873.8" y="638.5" font-size="11" fill="#9a9a9a" textLength="43.7" lengthAdjust="spacingAndGlyphs">Variables</text>
<circle cx="862" cy="658.6" r="6.5" fill="#c8c8c8"/>
<text x="873.8" y="662.5" font-size="11" fill="#9a9a9a" textLength="78.8" lengthAdjust="spacingAndGlyphs">Constant Values</text>
<rect x="857" y="675.6" width="10" height="14" fill="#9c9c9c"/><rect x="858.5" y="677.1" width="7" height="3" fill="#ddd"/><path d="M858 682.6 H866 M858 685.1 H866 M858 687.6 H866 M860.5 681.6 V688.6 M863.2 681.6 V688.6" stroke="#ddd" stroke-width="0.8"/>
<text x="873.8" y="686.5" font-size="11" fill="#9a9a9a" textLength="49.1" lengthAdjust="spacingAndGlyphs">Calculator</text>
<text x="855" y="710.9" font-size="12.5" fill="#888">{</text><text x="865.3" y="710.9" font-size="12.5" fill="#888">}</text><circle cx="862" cy="706.6" r="3.3" fill="none" stroke="#888" stroke-width="1.4"/>
<text x="873.8" y="710.5" font-size="11" fill="#9a9a9a" textLength="64.0" lengthAdjust="spacingAndGlyphs">Text Replace</text>
<text x="862" y="735.1" font-size="13" fill="#888" text-anchor="middle" letter-spacing="1">{J}</text>
<text x="873.8" y="734.5" font-size="11" fill="#9a9a9a" textLength="55.4" lengthAdjust="spacingAndGlyphs">JSON Read</text>
<text x="862" y="759.1" font-size="13" fill="#888" text-anchor="middle" letter-spacing="1">{J}</text>
<text x="873.8" y="758.5" font-size="11" fill="#9a9a9a" textLength="56.2" lengthAdjust="spacingAndGlyphs">JSON Write</text>
<text x="862" y="782.4" font-size="11" fill="#555" text-anchor="middle" letter-spacing="-0.5">&lt;/&gt;</text>
<text x="873.8" y="782.5" font-size="11" fill="#9a9a9a" textLength="52.3" lengthAdjust="spacingAndGlyphs">XML/XPath</text>
<rect x="855" y="797.6" width="11" height="12" fill="#c0c0c0"/><path d="M862 802.6 L868 796.6 M865 796.1 L869 800.1" stroke="#888" stroke-width="1.5"/>
<text x="873.8" y="806.5" font-size="11" fill="#9a9a9a" textLength="24.2" lengthAdjust="spacingAndGlyphs">Note</text>
<path d="M856 831.6 Q853.5 831.6 854 827.6 Q855 824.6 858 824.6 Q860 820.6 864 821.6 Q868 822.6 868 825.6 Q871 826.6 870 829.6 Q869.5 831.6 867 831.6Z" fill="#fff" stroke="#999" stroke-width="1"/><text x="862" y="829.9" font-size="6.5" font-weight="bold" fill="#888" text-anchor="middle">R</text>
<text x="873.8" y="830.5" font-size="11" fill="#9a9a9a" textLength="23.4" lengthAdjust="spacingAndGlyphs">Rest</text>
<rect x="855" y="842" width="14" height="2" fill="#ccc"/>
</g>

<!-- status bar -->
<rect x="0" y="848" width="1041" height="24" fill="#558a6e"/>
<rect x="0" y="870.5" width="1041" height="1.5" fill="#2b4a3b"/>
<circle cx="17" cy="859.5" r="5.5" fill="#8fb5a0"/>
<rect x="1033" y="858" width="2" height="2" fill="#d8e6de"/><rect x="1030" y="861" width="2" height="2" fill="#d8e6de"/><rect x="1033" y="861" width="2" height="2" fill="#d8e6de"/><rect x="1027" y="864" width="2" height="2" fill="#d8e6de"/><rect x="1030" y="864" width="2" height="2" fill="#d8e6de"/><rect x="1033" y="864" width="2" height="2" fill="#d8e6de"/>
<text x="29.5" y="864" font-size="11.5" fill="#f4f4f4" textLength="98.5" lengthAdjust="spacingAndGlyphs">OPC Router started.</text>
</svg>
</body></html>
